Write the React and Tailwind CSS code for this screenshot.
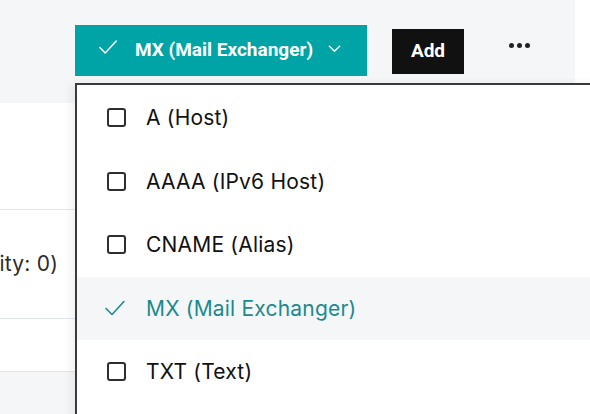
import React from 'react';

const CheckIcon = ({ className }) => (
  <svg viewBox="0 0 24 24" className={className} fill="none" stroke="currentColor" strokeWidth="1.6" strokeLinecap="round" strokeLinejoin="round">
    <path d="M3 12.5l6 6L21 5.5" />
  </svg>
);

const records = [
  { label: 'A (Host)' },
  { label: 'AAAA (IPv6 Host)' },
  { label: 'CNAME (Alias)' },
  { label: 'MX (Mail Exchanger)', selected: true },
  { label: 'TXT (Text)' },
];

export default function App() {
  return (
    <div className="relative w-[590px] h-[414px] overflow-hidden bg-white text-[#111]" style={{ fontFamily: 'Inter, "Noto Sans", sans-serif' }}>
      {/* page behind the menu */}
      <div className="w-[575px]">
        <div className="h-[103px] bg-[#f5f6f8] flex items-start pt-[25px] pl-[75px]">
          <button className="h-[51px] w-[292px] bg-[#00a4a6] text-white flex items-center pl-[22px] font-[Roboto,sans-serif]">
            <CheckIcon className="w-[22px] h-[22px] -mt-[8px]" />
            <span className="ml-[16px] font-bold text-[19px]">MX (Mail Exchanger)</span>
            <svg viewBox="0 0 16 16" className="ml-[14px] w-[15px] h-[15px] -mt-[4px]" fill="none" stroke="currentColor" strokeWidth="1.4">
              <path d="M2 5l6 6 6-6" />
            </svg>
          </button>
          <button className="ml-[25px] mt-[4px] h-[45px] w-[72px] bg-[#111] text-white font-bold text-[19px] font-[Roboto,sans-serif]">Add</button>
          <div className="ml-[45px] mt-[18px] flex gap-[3px]">
            <span className="w-[5px] h-[5px] rounded-full bg-[#222]" />
            <span className="w-[5px] h-[5px] rounded-full bg-[#222]" />
            <span className="w-[5px] h-[5px] rounded-full bg-[#222]" />
          </div>
        </div>
        <div className="h-[107px] border-b border-[#e2e5ea]" />
        <div className="h-[109px] border-b border-[#e2e5ea] flex items-center">
          <div className="w-[58px] flex justify-end whitespace-nowrap text-[21px] tracking-[0.2px] text-[#2b2b2b]">(Priority: 0)</div>
        </div>
        <div className="h-[53px] border-b border-[#e2e5ea]" />
        <div className="h-[42px] bg-[#f5f6f8]" />
      </div>

      {/* record type menu */}
      <div className="absolute left-[75px] top-[83px] w-[540px] h-[360px] bg-white border-t-2 border-l-2 border-[#3a3a3a] pt-[1px] shadow-[-4px_0_8px_rgba(0,0,0,0.06)]">
        {records.map((r) =>
          <div key={r.label} className={`h-[63.5px] flex items-center pl-[30px] ${r.selected ? 'bg-[#f5f6f8] text-[#1b8a8e]' : ''}`}>
            {r.selected ? (
              <CheckIcon className="w-[24px] h-[24px] text-[#1b8a8e] -ml-[4px] mr-[19px]" />
            ) : (
              <span className="w-[19px] h-[19px] rounded-[3px] border-2 border-[#2e2e2e] mr-[20px]" />
            )}
            <span className="text-[21px] tracking-[0.2px]">{r.label}</span>
          </div>
        )}
      </div>
    </div>
  );
}
